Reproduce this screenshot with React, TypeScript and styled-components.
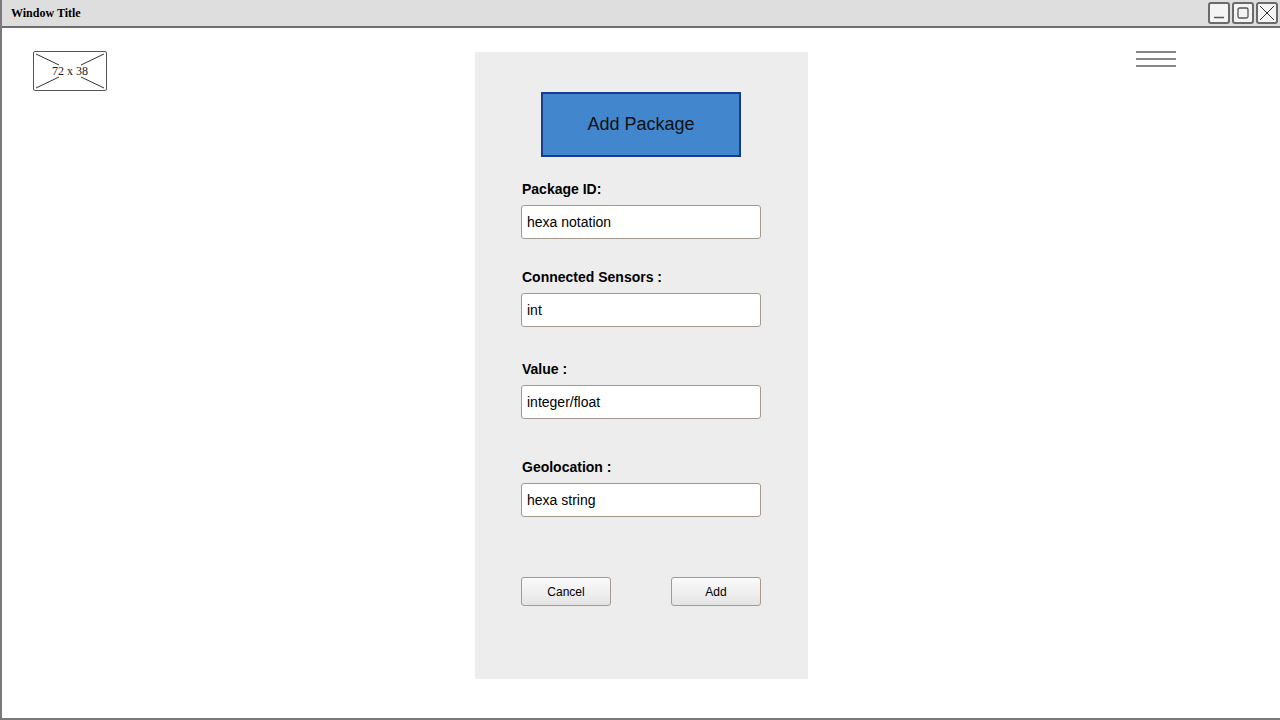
import styled, { createGlobalStyle } from "styled-components";

const GlobalStyle = createGlobalStyle`
  html, body {
    margin: 0;
    padding: 0;
    background: #ffffff;
    overflow: hidden;
  }
`;

const Frame = styled.div`
  box-sizing: border-box;
  width: 1280px;
  height: 720px;
  border-left: 2px solid #7a7a7a;
  border-bottom: 2px solid #7a7a7a;
  display: flex;
  flex-direction: column;
  background: #ffffff;
`;

const TitleBar = styled.div`
  box-sizing: border-box;
  height: 28px;
  background: #dedede;
  border-bottom: 2px solid #6e6e6e;
  display: flex;
  align-items: center;
  justify-content: space-between;
  padding: 0 2px 0 9px;
`;

const Title = styled.span`
  font-family: "Liberation Serif", serif;
  font-weight: bold;
  font-size: 12px;
  color: #000;
`;

const WinButtons = styled.div`
  display: flex;
  gap: 2px;
`;

const WinButton = styled.div`
  box-sizing: border-box;
  width: 22px;
  height: 22px;
  border: 2px solid #6a6a6a;
  border-radius: 3px;
  background: #f4f4f4;
  display: flex;
  align-items: center;
  justify-content: center;
`;

const Body = styled.div`
  flex: 1;
  display: grid;
  grid-template-columns: 473px 333px 1fr;
  padding-top: 24px;
`;

const LeftCol = styled.div`
  padding-left: 31px;
`;

const Placeholder = styled.div`
  position: relative;
  box-sizing: border-box;
  width: 74px;
  height: 40px;
  margin-top: -1px;
  border: 1px solid #555;
  border-radius: 2px;
  display: flex;
  align-items: center;
  justify-content: center;
  font-family: "Liberation Serif", serif;
  font-size: 12px;
  color: #222;

  & > svg {
    position: absolute;
    inset: 0;
  }
  & > span {
    position: relative;
  }
`;

const Panel = styled.div`
  height: 627px;
  background: #ededed;
  display: flex;
  flex-direction: column;
  align-items: flex-start;
  padding: 40px 0 0 46px;
  box-sizing: border-box;
`;

const Banner = styled.div`
  box-sizing: border-box;
  width: 200px;
  height: 65px;
  margin-left: 20px;
  background: #4287cd;
  border: 2px solid #1a3a8c;
  display: flex;
  align-items: center;
  justify-content: center;
  font-family: "Liberation Sans", Arial, sans-serif;
  font-size: 18px;
  color: #111;
`;

const Field = styled.div<{ $top: number }>`
  width: 240px;
  margin-top: ${(p) => p.$top}px;
  display: flex;
  flex-direction: column;
  gap: 8px;
`;

const Label = styled.label`
  font-family: "Liberation Sans", Arial, sans-serif;
  font-weight: bold;
  font-size: 14px;
  line-height: 16px;
  color: #000;
  padding-left: 1px;
`;

const Input = styled.input`
  box-sizing: border-box;
  width: 240px;
  height: 34px;
  border: 1px solid #a39a8d;
  border-radius: 3px;
  background: #fff;
  padding: 0 5px;
  font-family: "Liberation Sans", Arial, sans-serif;
  font-size: 14px;
  color: #000;
  outline: none;
`;

const Actions = styled.div`
  width: 240px;
  margin-top: 60px;
  display: flex;
  justify-content: space-between;
`;

const Button = styled.button`
  box-sizing: border-box;
  width: 90px;
  height: 29px;
  border: 1px solid #a39a8d;
  border-radius: 3px;
  background: linear-gradient(#fafafa, #f0f0f0 50%, #e4e4e4);
  font-family: "Liberation Sans", Arial, sans-serif;
  font-size: 12px;
  color: #000;
  padding: 0;
`;

const RightCol = styled.div`
  display: flex;
  justify-content: flex-end;
  padding-right: 104px;
`;

const Hamburger = styled.div`
  width: 40px;
  display: flex;
  flex-direction: column;
  gap: 5px;
  margin-top: -1px;

  & > i {
    display: block;
    height: 2px;
    background: #888;
  }
`;

const fields = [
  { label: "Package ID:", value: "hexa notation", top: 24 },
  { label: "Connected Sensors :", value: "int", top: 30 },
  { label: "Value :", value: "integer/float", top: 34 },
  { label: "Geolocation :", value: "hexa string", top: 40 },
];

export default function App() {
  return (
    <>
      <GlobalStyle />
      <Frame>
        <TitleBar>
          <Title>Window Title</Title>
          <WinButtons>
            <WinButton>
              <svg width="18" height="18" viewBox="0 0 18 18">
                <line x1="4" y1="13.5" x2="14" y2="13.5" stroke="#555" strokeWidth="1.5" />
              </svg>
            </WinButton>
            <WinButton>
              <svg width="18" height="18" viewBox="0 0 18 18">
                <rect x="4" y="4" width="10" height="10" rx="1.5" fill="none" stroke="#555" strokeWidth="1.3" />
              </svg>
            </WinButton>
            <WinButton>
              <svg width="18" height="18" viewBox="0 0 18 18">
                <path d="M2 2 L16 16 M16 2 L2 16" stroke="#333" strokeWidth="1" />
              </svg>
            </WinButton>
          </WinButtons>
        </TitleBar>
        <Body>
          <LeftCol>
            <Placeholder>
              <svg width="72" height="38" viewBox="0 0 72 38">
                <path d="M2 2 L25 13 M70 2 L47 13 M2 36 L25 25 M70 36 L47 25" stroke="#333" strokeWidth="1" />
              </svg>
              <span>72 x 38</span>
            </Placeholder>
          </LeftCol>
          <Panel>
            <Banner>Add Package</Banner>
            {fields.map((f) => (
              <Field key={f.label} $top={f.top}>
                <Label>{f.label}</Label>
                <Input defaultValue={f.value} />
              </Field>
            ))}
            <Actions>
              <Button>Cancel</Button>
              <Button>Add</Button>
            </Actions>
          </Panel>
          <RightCol>
            <Hamburger>
              <i />
              <i />
              <i />
            </Hamburger>
          </RightCol>
        </Body>
      </Frame>
    </>
  );
}
